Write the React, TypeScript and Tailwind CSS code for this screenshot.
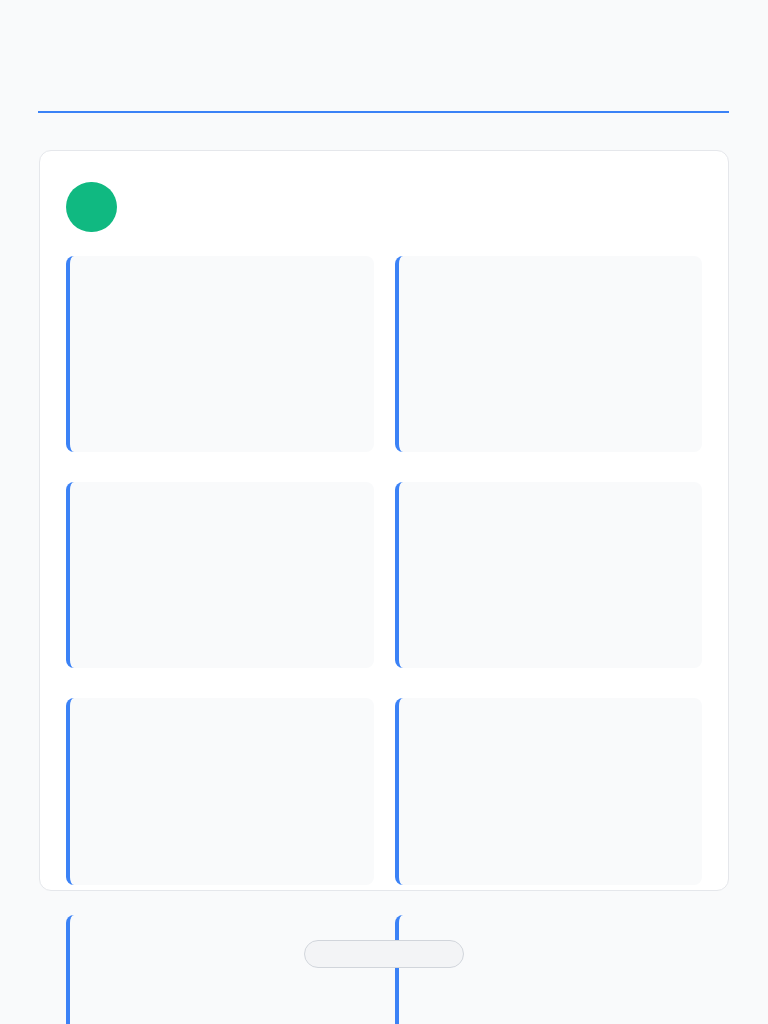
import React from 'react';

const rows = [196, 186, 187, 186];

function Tile({ height }: { height: number }) {
  return (
    <div
      className="rounded-lg border-l-4 border-[#3b82f6] bg-[#f9fafb]"
      style={{ height }}
    />
  );
}

export default function App() {
  return (
    <div className="min-h-screen bg-[#f9fafb] font-['Inter',sans-serif]">
      <div className="px-[38px] pt-[111px]">
        {/* Accent divider */}
        <div className="mr-px h-[2px] bg-[#3b82f6]" />

        {/* Main panel */}
        <div className="mx-px mt-[37px] h-[741px] rounded-xl border border-[#e5e7eb] bg-white px-[26px] pt-[31px]">
          <div className="mb-[24px] h-[50px] w-[51px] rounded-full bg-[#10b981]" />

          <div className="grid grid-cols-2 gap-x-[21px] gap-y-[30px]">
            {rows.map((h, i) => (
              <React.Fragment key={i}>
                <Tile height={h} />
                <Tile height={h} />
              </React.Fragment>
            ))}
          </div>
        </div>
      </div>

      {/* Floating pill */}
      <div className="fixed bottom-[56px] left-1/2 h-[28px] w-[160px] -translate-x-1/2 rounded-full border border-[#d1d5db] bg-[#f3f4f6]" />
    </div>
  );
}
